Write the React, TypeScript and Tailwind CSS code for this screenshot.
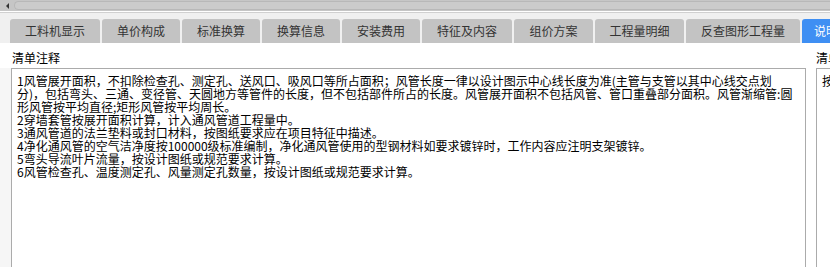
import React from "react";

const tabs: { label: string; w: string }[] = [
  { label: "工料机显示", w: "w-[90px]" },
  { label: "单价构成", w: "w-[78px]" },
  { label: "标准换算", w: "w-[78px]" },
  { label: "换算信息", w: "w-[78px]" },
  { label: "安装费用", w: "w-[78px]" },
  { label: "特征及内容", w: "w-[90px]" },
  { label: "组价方案", w: "w-[79px]" },
  { label: "工程量明细", w: "w-[89px]" },
  { label: "反查图形工程量", w: "w-[114px]" },
];

const lines = [
  "1风管展开面积，不扣除检查孔、测定孔、送风口、吸风口等所占面积；风管长度一律以设计图示中心线长度为准(主管与支管以其中心线交点划",
  "分)，包括弯头、三通、变径管、天圆地方等管件的长度，但不包括部件所占的长度。风管展开面积不包括风管、管口重叠部分面积。风管渐缩管:圆",
  "形风管按平均直径;矩形风管按平均周长。",
  "2穿墙套管按展开面积计算，计入通风管道工程量中。",
  "3通风管道的法兰垫料或封口材料，按图纸要求应在项目特征中描述。",
  "4净化通风管的空气洁净度按100000级标准编制，净化通风管使用的型钢材料如要求镀锌时，工作内容应注明支架镀锌。",
  "5弯头导流叶片流量，按设计图纸或规范要求计算。",
  "6风管检查孔、温度测定孔、风量测定孔数量，按设计图纸或规范要求计算。",
];

export default function App() {
  return (
    <div
      className="w-[830px] h-[267px] overflow-hidden bg-[#f0f0f0] flex flex-col text-[12px] text-black"
      style={{ fontFamily: '"Noto Sans CJK SC", "Noto Sans", sans-serif' }}
    >
      {/* top scrollbar */}
      <div className="h-[11px] shrink-0 bg-[#c6c6c6] flex items-center">
        <div className="w-[14px] h-full flex items-center justify-center">
          <div className="w-0 h-0 border-y-[3px] border-y-transparent border-r-[3px] border-r-[#333]" />
        </div>
        <div className="flex-1 h-[9px] rounded-l-full bg-[#cbcbcb] border border-[#b8b8b8] border-r-0" />
      </div>
      <div className="h-[1px] shrink-0 bg-white" />
      <div className="h-[1px] shrink-0 bg-[#d0d0d0]" />
      {/* tabs */}
      <div className="h-[30px] shrink-0 flex items-end pl-[10px] gap-[2px] pt-[6px]">
        {tabs.map((t) => (
          <div
            key={t.label}
            className={`${t.w} h-[24px] shrink-0 rounded-t-[3px] bg-[#c3c3c3] text-[#333] flex items-center justify-center whitespace-nowrap`}
          >
            {t.label}
          </div>
        ))}
        <div className="w-[60px] h-[24px] shrink-0 rounded-t-[3px] bg-[#3f8ff3] text-white flex items-center pl-[12px] whitespace-nowrap">
          说明信息
        </div>
      </div>
      {/* content */}
      <div className="flex-1 bg-white flex min-h-0">
        <div className="w-[806px] shrink-0 flex flex-col">
          <div className="h-[25px] shrink-0 flex items-center pl-[12px] pt-[4px]">清单注释</div>
          <div className="flex-1 flex min-h-0">
            <div className="w-[11px] shrink-0 bg-[#f6f6f6]" />
            <div className="flex-1 border-l border-r border-t border-[#ababab] pl-[5px] pt-[5px] overflow-hidden leading-[13px]">
              {lines.map((l, i) => (
                <div key={i} className="whitespace-nowrap">
                  {l}
                </div>
              ))}
            </div>
          </div>
        </div>
        <div className="w-[10px] shrink-0" />
        <div className="flex-1 flex flex-col min-w-0">
          <div className="h-[25px] shrink-0 flex items-center pt-[4px] whitespace-nowrap overflow-hidden">清单说明</div>
          <div className="flex-1 border-l border-t border-[#ababab] pl-[5px] pt-[5px] leading-[13px] whitespace-nowrap overflow-hidden">
            按设计图示
          </div>
        </div>
      </div>
    </div>
  );
}
